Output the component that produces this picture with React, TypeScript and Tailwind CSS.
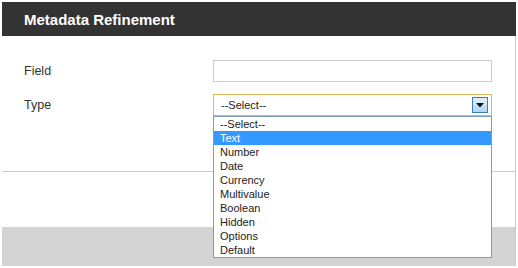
const options = [
  "--Select--",
  "Text",
  "Number",
  "Date",
  "Currency",
  "Multivalue",
  "Boolean",
  "Hidden",
  "Options",
  "Default",
];

export default function App() {
  return (
    <div className="h-[268px] w-[518px] bg-white pl-[2px] pt-[2px] font-['Liberation_Sans',Arial,sans-serif]">
      <div className="w-[514px]">
        {/* Header */}
        <div className="flex h-[34px] items-center bg-[#333333] pl-[22px] pt-[2px]">
          <h1 className="text-[15px] font-bold text-white">Metadata Refinement</h1>
        </div>

        {/* Body */}
        <div className="border-r border-[#cccccc]">
          <div className="flex flex-col gap-[12px] border-b border-[#cccccc] pb-[55px] pl-[22px] pt-[24px]">
            <div className="flex items-center">
              <label className="w-[189px] text-[12.5px] text-[#333333]">Field</label>
              <input
                type="text"
                className="h-[22px] w-[279px] border border-[#cccccc] bg-white outline-none"
              />
            </div>

            <div className="flex items-center">
              <label className="w-[189px] text-[12.5px] text-[#333333]">Type</label>
              <div className="relative h-[22px] w-[279px]">
                <div className="flex h-full items-center justify-between border border-[#e6b554] bg-white pl-[7px] pr-[3px]">
                  <span className="text-[11px] text-[#222222]">--Select--</span>
                  <span className="flex h-[16px] w-[16px] items-center justify-center border border-[#3c7fb1] bg-gradient-to-b from-[#e3f1fc] to-[#aed6f4]">
                    <svg width="8" height="5" viewBox="0 0 8 5">
                      <path d="M0 0 L8 0 L4 4.5 Z" fill="#111111" />
                    </svg>
                  </span>
                </div>

                {/* Open list */}
                <ul className="absolute left-0 top-[22px] z-10 w-[279px] border border-[#7f9db9] bg-white">
                  {options.map((o) => (
                    <li
                      key={o}
                      className={
                        o === "Text"
                          ? "flex h-[14px] items-center bg-[#3399ff] pl-[6px] text-[11px] text-white"
                          : "flex h-[14px] items-center pl-[6px] text-[11px] text-[#222222]"
                      }
                    >
                      {o}
                    </li>
                  ))}
                </ul>
              </div>
            </div>
          </div>

          {/* Footer */}
          <div className="h-[55px] bg-white" />
          <div className="h-[39px] bg-[#d4d4d4]" />
        </div>
      </div>
    </div>
  );
}
